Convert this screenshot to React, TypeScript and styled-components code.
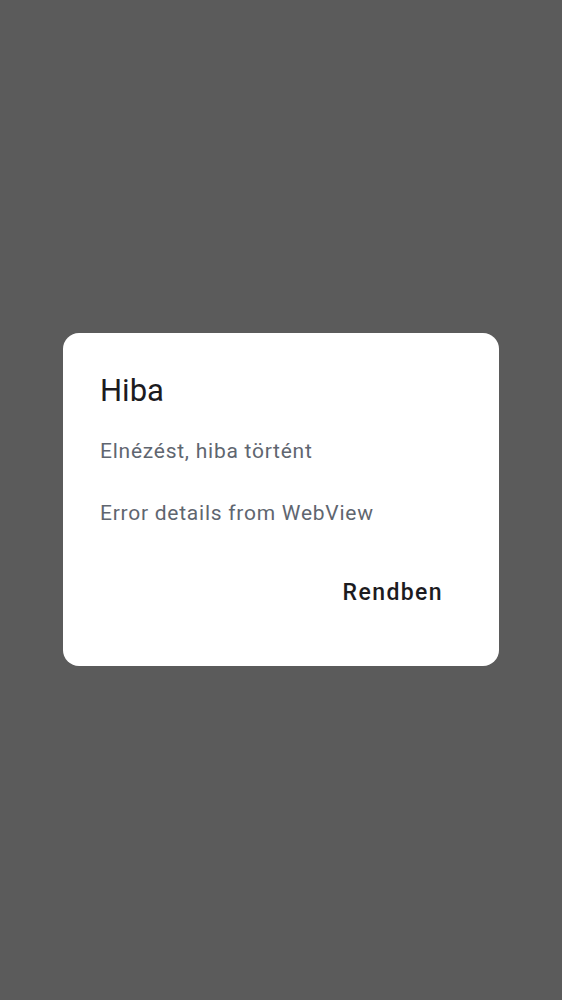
import React from "react";
import styled, { createGlobalStyle } from "styled-components";

const Global = createGlobalStyle`
  html, body { margin: 0; padding: 0; background: #5b5b5b; }
  body { font-family: Roboto, "Noto Sans", Arial, sans-serif; }
`;

const Backdrop = styled.div`
  min-height: 100vh;
  box-sizing: border-box;
  padding-bottom: 2px;
  display: flex;
  align-items: center;
  justify-content: center;
  background: #5b5b5b;
`;

const Card = styled.div`
  width: 436px;
  box-sizing: border-box;
  background: #ffffff;
  border-radius: 16px;
  padding: 38px 37px 49px 37px;
  display: flex;
  flex-direction: column;
`;

const Title = styled.h2`
  margin: 0;
  font-size: 31px;
  line-height: 40px;
  font-weight: 400;
  color: #1c1b1f;
`;

const Message = styled.p<{ $gap: number }>`
  margin: ${(p) => p.$gap}px 0 0 0;
  font-size: 21px;
  line-height: 28px;
  font-weight: 400;
  letter-spacing: 0.75px;
  color: #5f6670;
`;

const Actions = styled.div`
  display: flex;
  justify-content: flex-end;
  margin-top: 42px;
`;

const TextButton = styled.button`
  border: none;
  background: transparent;
  padding: 10px 19px 10px 20px;
  font-family: inherit;
  font-size: 23px;
  line-height: 28px;
  font-weight: 500;
  letter-spacing: 1.4px;
  color: #1c1b1f;
  cursor: pointer;
`;

export default function App() {
  return (
    <>
      <Global />
      <Backdrop>
        <Card>
          <Title>Hiba</Title>
          <Message $gap={26}>Elnézést, hiba történt</Message>
          <Message $gap={34}>Error details from WebView</Message>
          <Actions>
            <TextButton>Rendben</TextButton>
          </Actions>
        </Card>
      </Backdrop>
    </>
  );
}
